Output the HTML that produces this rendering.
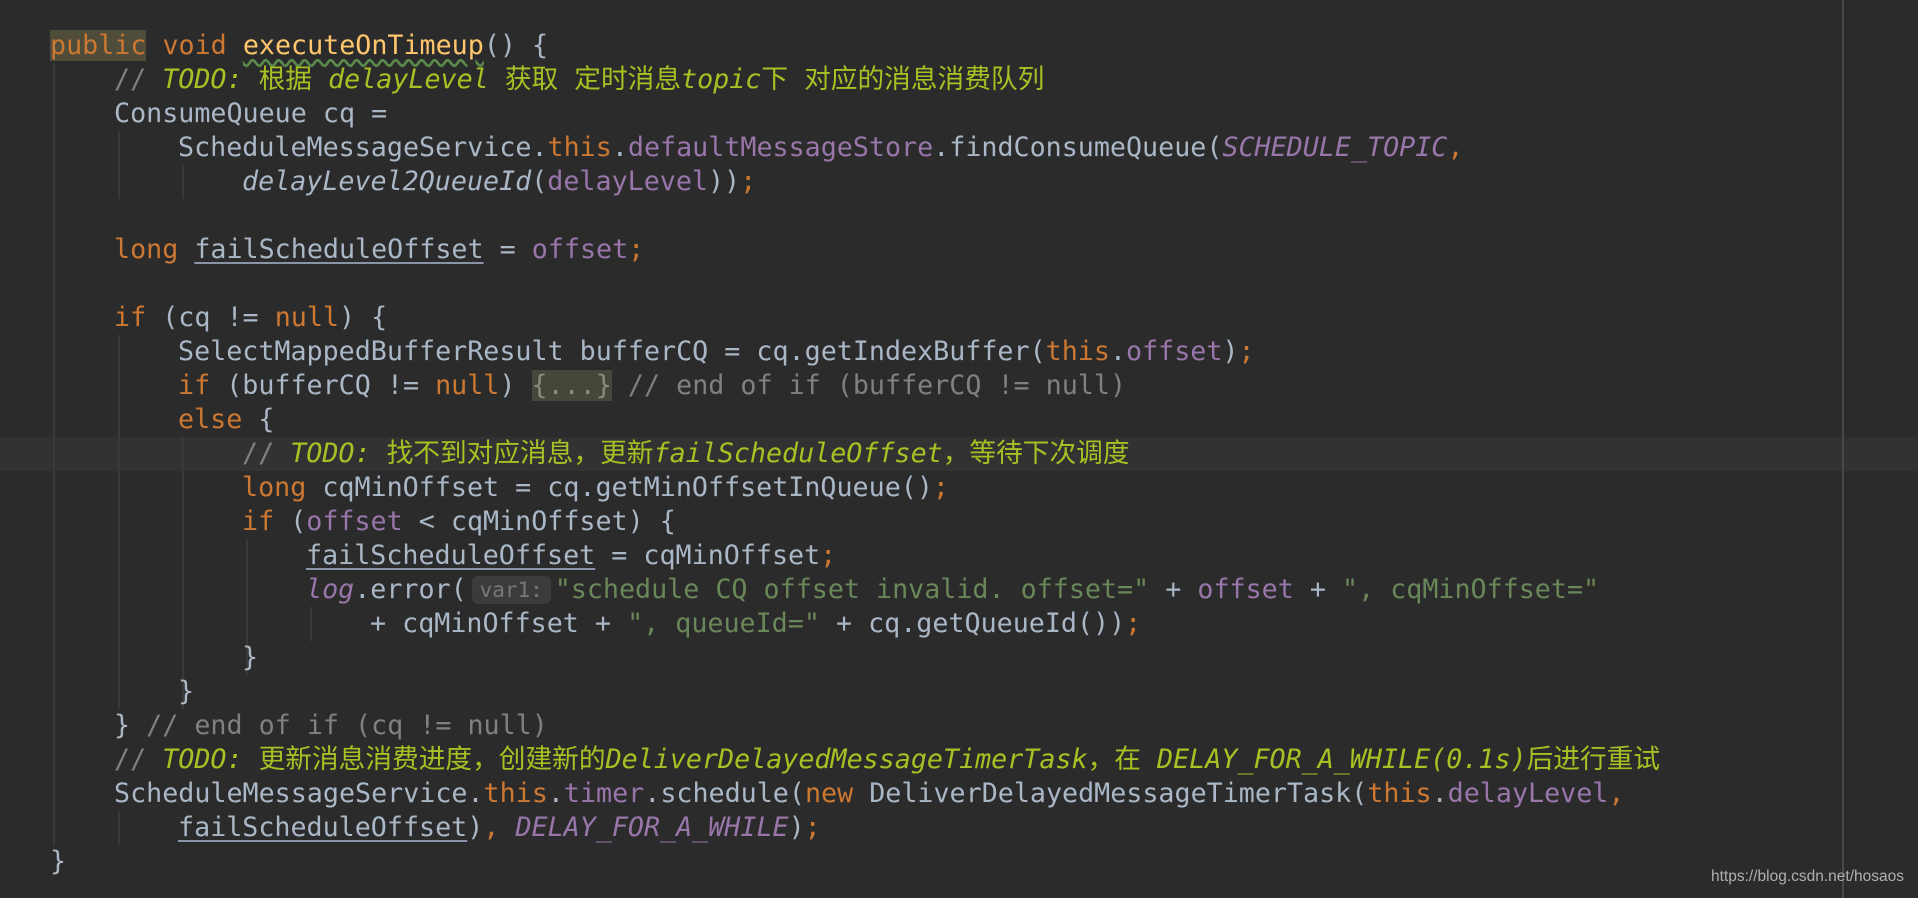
<!DOCTYPE html>
<html><head><meta charset="utf-8"><style>
html,body{margin:0;padding:0;background:#2b2b2b;width:1918px;height:898px;overflow:hidden;position:relative}
.l{position:absolute;left:0;height:34px;line-height:34px;white-space:pre;font-family:"DejaVu Sans Mono","Liberation Mono","Noto Sans CJK SC",monospace;font-size:26.7px;color:#a9b7c6}
.k{color:#cc7832}.f{color:#9876aa}.s{color:#6a8759}.c{color:#808080}.t{color:#a8c023;font-style:italic}.tz{color:#a8c023}
.m{color:#ffc66d}.i{font-style:italic}.u{text-decoration:underline;text-decoration-color:#8a93a8;text-underline-offset:4px}
.g{position:absolute;width:2px;background:#393939}
.cur{position:absolute;left:0;width:1918px;top:437px;height:34px;background:#323232}
.hint{display:inline-block;box-sizing:border-box;width:79px;height:28px;line-height:28px;vertical-align:1px;text-align:center;margin:0 4px 0 5px;background:#3b3b3b;color:#787878;font-size:21px;border-radius:6px;font-family:"DejaVu Sans Mono",monospace}
.fold{background:#45473a;color:#8a8a80}
</style></head><body>
<div class="cur"></div>
<div class="g" style="left:53px;top:63px;height:782px"></div>
<div class="g" style="left:118px;top:131px;height:68px"></div>
<div class="g" style="left:182px;top:165px;height:34px"></div>
<div class="g" style="left:118px;top:335px;height:374px"></div>
<div class="g" style="left:182px;top:437px;height:272px"></div>
<div class="g" style="left:246px;top:539px;height:136px"></div>
<div class="g" style="left:310px;top:607px;height:34px"></div>
<div class="g" style="left:118px;top:811px;height:34px"></div>
<div class="g" style="left:1842px;top:0;height:898px;background:#484848"></div>

<div class="l" style="top:29px;left:50px"><span class="k" style="background:#4f4c3a">public</span><span class="k"> void </span><span class="m" style="text-decoration:underline wavy #5a8a4a;text-underline-offset:5px">executeOnTimeup</span>() {</div>
<div class="l" style="top:63px;left:114px"><span class="c">// </span><span class="t">TODO:</span><span class="tz"> 根据 </span><span class="t">delayLevel</span><span class="tz"> 获取 定时消息</span><span class="t">topic</span><span class="tz">下 对应的消息消费队列</span></div>
<div class="l" style="top:97px;left:114px">ConsumeQueue cq =</div>
<div class="l" style="top:131px;left:178px">ScheduleMessageService.<span class="k">this</span>.<span class="f">defaultMessageStore</span>.findConsumeQueue(<span class="f i">SCHEDULE_TOPIC</span><span class="k">,</span></div>
<div class="l" style="top:165px;left:242px"><span class="i">delayLevel2QueueId</span>(<span class="f">delayLevel</span>))<span class="k">;</span></div>
<div class="l" style="top:233px;left:114px"><span class="k">long </span><span class="u">failScheduleOffset</span> = <span class="f">offset</span><span class="k">;</span></div>
<div class="l" style="top:301px;left:114px"><span class="k">if </span>(cq != <span class="k">null</span>) {</div>
<div class="l" style="top:335px;left:178px">SelectMappedBufferResult bufferCQ = cq.getIndexBuffer(<span class="k">this</span>.<span class="f">offset</span>)<span class="k">;</span></div>
<div class="l" style="top:369px;left:178px"><span class="k">if </span>(bufferCQ != <span class="k">null</span>) <span class="fold">{...}</span> <span class="c">// end of if (bufferCQ != null)</span></div>
<div class="l" style="top:403px;left:178px"><span class="k">else </span>{</div>
<div class="l" style="top:437px;left:242px"><span class="c">// </span><span class="t">TODO:</span><span class="tz"> 找不到对应消息，更新</span><span class="t">failScheduleOffset</span><span class="tz">，等待下次调度</span></div>
<div class="l" style="top:471px;left:242px"><span class="k">long </span>cqMinOffset = cq.getMinOffsetInQueue()<span class="k">;</span></div>
<div class="l" style="top:505px;left:242px"><span class="k">if </span>(<span class="f">offset</span> &lt; cqMinOffset) {</div>
<div class="l" style="top:539px;left:306px"><span class="u">failScheduleOffset</span> = cqMinOffset<span class="k">;</span></div>
<div class="l" style="top:573px;left:306px"><span class="f i">log</span>.error(<span class="hint">var1:</span><span class="s">"schedule CQ offset invalid. offset="</span> + <span class="f">offset</span> + <span class="s">", cqMinOffset="</span></div>
<div class="l" style="top:607px;left:370px">+ cqMinOffset + <span class="s">", queueId="</span> + cq.getQueueId())<span class="k">;</span></div>
<div class="l" style="top:641px;left:242px">}</div>
<div class="l" style="top:675px;left:178px">}</div>
<div class="l" style="top:709px;left:114px">} <span class="c">// end of if (cq != null)</span></div>
<div class="l" style="top:743px;left:114px"><span class="c">// </span><span class="t">TODO:</span><span class="tz"> 更新消息消费进度，创建新的</span><span class="t">DeliverDelayedMessageTimerTask</span><span class="tz">，在 </span><span class="t">DELAY_FOR_A_WHILE(0.1s)</span><span class="tz">后进行重试</span></div>
<div class="l" style="top:777px;left:114px">ScheduleMessageService.<span class="k">this</span>.<span class="f">timer</span>.schedule(<span class="k">new </span>DeliverDelayedMessageTimerTask(<span class="k">this</span>.<span class="f">delayLevel</span><span class="k">,</span></div>
<div class="l" style="top:811px;left:178px"><span class="u">failScheduleOffset</span>)<span class="k">, </span><span class="f i">DELAY_FOR_A_WHILE</span>)<span class="k">;</span></div>
<div class="l" style="top:845px;left:50px">}</div>
<div style="position:absolute;left:1711px;top:868px;font-family:'Liberation Sans',sans-serif;font-size:15.5px;color:#b0b0b0">https://blog.csdn.net/hosaos</div>
</body></html>
